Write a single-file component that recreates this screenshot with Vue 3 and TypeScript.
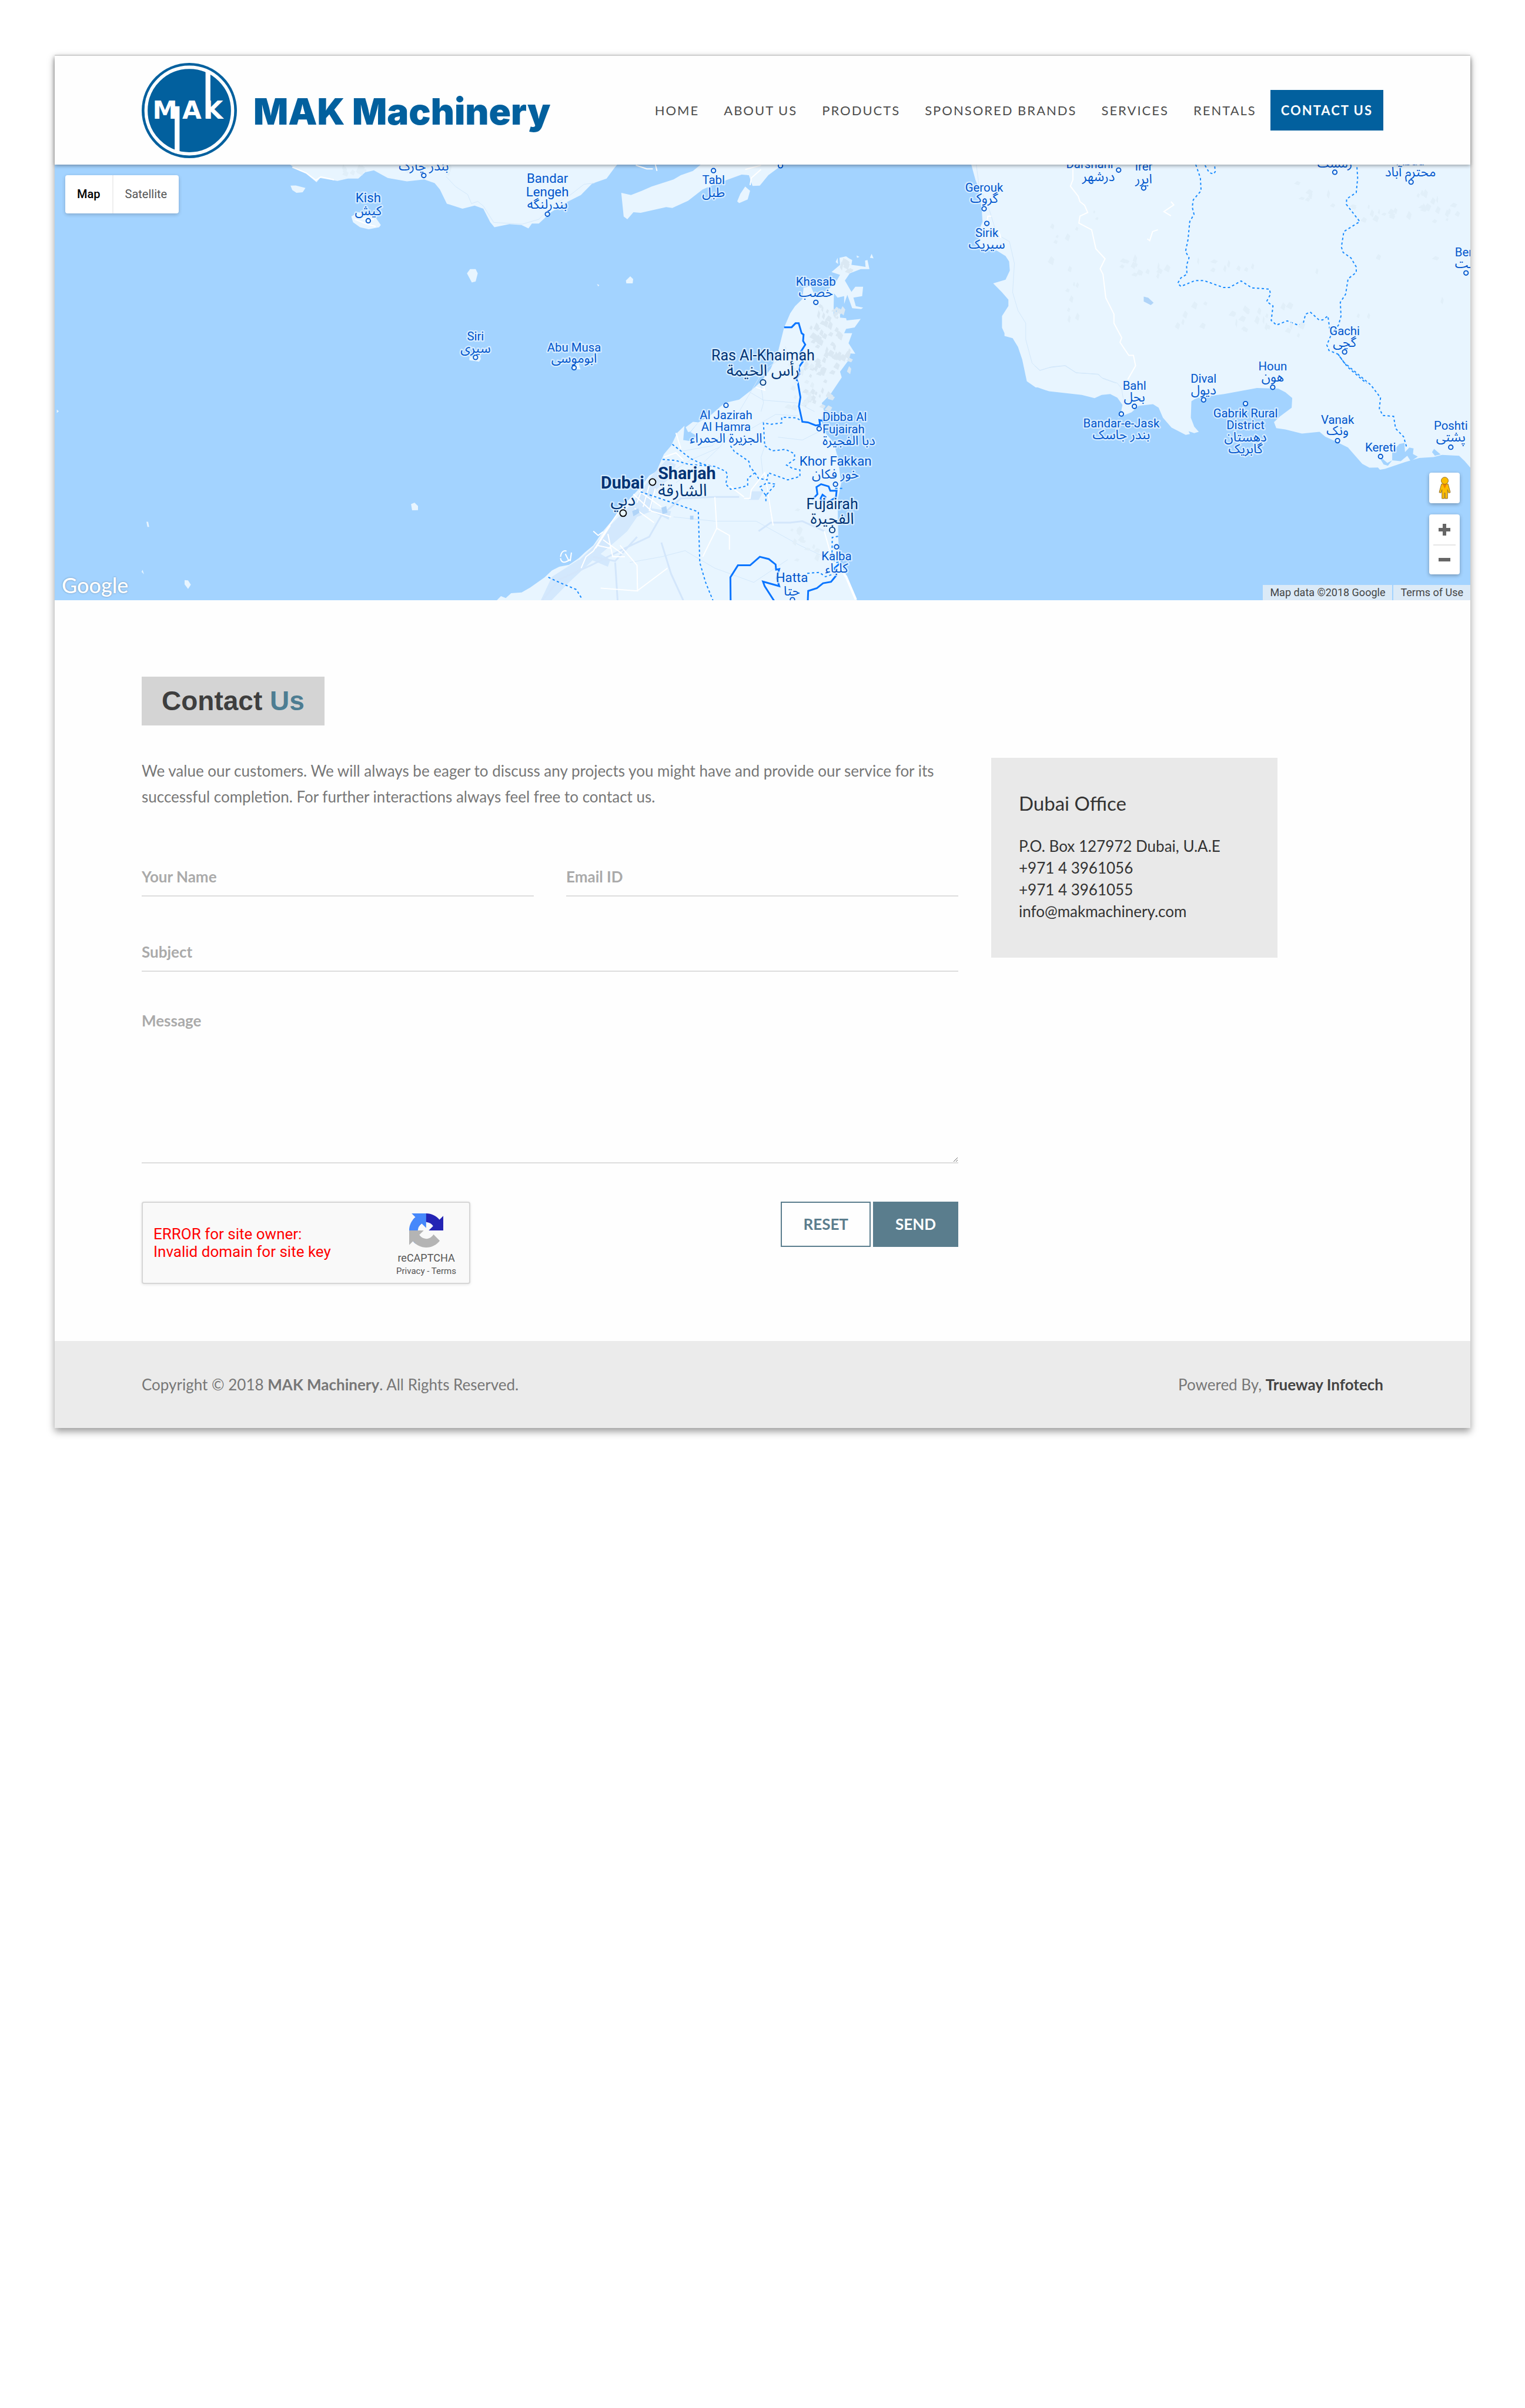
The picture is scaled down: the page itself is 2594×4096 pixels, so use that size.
<script setup lang="ts">
import { reactive } from 'vue'

type Anchor = 'start' | 'middle' | 'end'
interface Line { text: string; x: number; y: number; rtl?: boolean }
interface Place { kind: 'town' | 'town mid' | 'town major' | 'city'; anchor?: Anchor; lines: Line[]; dot?: [number, number] }

const nav = ['Home', 'About Us', 'Products', 'Sponsored Brands', 'Services', 'Rentals']

const form = reactive({ name: '', email: '', subject: '', message: '' })
function reset() {
  form.name = form.email = form.subject = form.message = ''
}

const t = (text: string, x: number, y: number): Line => ({ text, x, y })
const a = (text: string, x: number, y: number): Line => ({ text, x, y, rtl: true })

const places: Place[] = [
  { kind: 'town', lines: [a('بندر چارک', 678, 11)], dot: [678, 20] },
  { kind: 'town mid', lines: [t('Kish', 576, 69), a('کیش', 576, 93)], dot: [576, 103] },
  { kind: 'town mid', lines: [t('Bandar', 905, 34), t('Lengeh', 905, 58), a('بندرلنگه', 905, 81)], dot: [905, 91] },
  { kind: 'town', lines: [t('Siri', 773, 323), a('سیری', 773, 345)], dot: [773, 354] },
  { kind: 'town', lines: [t('Abu Musa', 954, 343), a('ابوموسی', 954, 364)], dot: [954, 373] },
  { kind: 'town', lines: [t('Tabl', 1210, 36), a('طبل', 1210, 59)], dot: [1210, 11] },
  { kind: 'town', lines: [], dot: [1333, 2] },
  { kind: 'town', lines: [t('Khasab', 1398, 222), a('خصب', 1398, 243)], dot: [1398, 253] },
  { kind: 'town major', lines: [t('Ras Al-Khaimah', 1301, 359), a('رأس الخيمة', 1301, 388)], dot: [1301, 400] },
  { kind: 'town', lines: [t('Al Jazirah', 1233, 467), t('Al Hamra', 1233, 489), a('الجزيرة الحمراء', 1233, 511)], dot: [1233, 442] },
  { kind: 'town', anchor: 'start', lines: [t('Dibba Al', 1410, 471), t('Fujairah', 1410, 493), a('دبا الفجيرة', 1410, 515)], dot: [1404, 485] },
  { kind: 'town mid', lines: [t('Khor Fakkan', 1434, 553), a('خور فكان', 1434, 576)], dot: [1434, 587] },
  { kind: 'town major', lines: [t('Fujairah', 1428, 633), a('الفجيرة', 1428, 660)], dot: [1428, 671] },
  { kind: 'town', lines: [t('Kalba', 1436, 727), a('كلباء', 1436, 749)], dot: [1436, 702] },
  { kind: 'town mid', lines: [t('Hatta', 1354, 767), a('حتا', 1354, 791)], dot: [1355, 799] },
  { kind: 'city', lines: [t('Dubai', 1043, 595), a('دبي', 1044, 626)], dot: [1044, 640] },
  { kind: 'city', anchor: 'start', lines: [t('Sharjah', 1108, 578), a('الشارقة', 1108, 609)], dot: [1098, 583] },
  { kind: 'town', lines: [t('Gerouk', 1707, 50), a('گروک', 1707, 70)], dot: [1707, 81] },
  { kind: 'town', lines: [t('Sirik', 1712, 133), a('سیریک', 1712, 154)], dot: [1712, 108] },
  { kind: 'town', lines: [t('Darshahr', 1902, 6), a('درشهر', 1917, 30)], dot: [1954, 10] },
  { kind: 'town', lines: [t('Irer', 2000, 11), a('ایرر', 2000, 35)], dot: [2000, 43] },
  { kind: 'town', lines: [a('رمشک', 2351, 5)], dot: [2351, 14] },
  { kind: 'town', lines: [t('Abad', 2490, 1), a('محترم آباد', 2490, 22)], dot: [2491, 32] },
  { kind: 'town', lines: [t('Bent', 2594, 168), a('بنت', 2592, 190)], dot: [2592, 199] },
  { kind: 'town', lines: [t('Gachi', 2369, 313), a('گچی', 2369, 335)], dot: [2369, 344] },
  { kind: 'town', lines: [t('Houn', 2237, 378), a('هون', 2237, 398)], dot: [2237, 409] },
  { kind: 'town', lines: [t('Dival', 2110, 401), a('دیول', 2110, 422)], dot: [2110, 432] },
  { kind: 'town', lines: [t('Bahl', 1983, 413), a('بحل', 1983, 435)], dot: [1983, 444] },
  { kind: 'town', lines: [t('Bandar-e-Jask', 1959, 483), a('بندر جاسک', 1959, 504)], dot: [1959, 458] },
  { kind: 'town', lines: [t('Gabrik Rural', 2187, 464), t('District', 2187, 486), a('دهستان', 2187, 508), a('گابریک', 2187, 530)], dot: [2187, 439] },
  { kind: 'town', lines: [t('Vanak', 2356, 476), a('ونک', 2356, 497)], dot: [2356, 507] },
  { kind: 'town', lines: [t('Kereti', 2435, 527)], dot: [2435, 536] },
  { kind: 'town', lines: [t('Poshti', 2564, 487), a('پشتی', 2564, 509)], dot: [2564, 519] },
]

/* Hill shading: small facets scattered round a centre, always the same for a given seed. */
function hills(cx: number, cy: number, w: number, h: number, count: number, seed: number): string {
  let s = seed * 7919
  const rnd = () => {
    s = (s * 16807) % 2147483647
    return s / 2147483647
  }
  let d = ''
  for (let i = 0; i < count; i++) {
    const x = Math.round(cx + (rnd() - 0.5) * w)
    const y = Math.round(cy + (rnd() - 0.5) * h)
    const l = Math.round(4 + rnd() * 7)
    const k = Math.round(2 + rnd() * 5)
    d += `M${x} ${y}l${k} -${l}l${k} ${Math.round(l / 2)}l-${Math.round(k / 2)} ${l}z`
  }
  return d
}
const darkHills = [
  hills(1415, 295, 60, 70, 30, 11),
  hills(1425, 350, 70, 70, 26, 27),
  hills(1395, 410, 50, 80, 26, 5),
  hills(1445, 190, 20, 30, 8, 93),
]
const paleHills = [
  hills(1365, 400, 50, 120, 22, 19),
  hills(1370, 680, 50, 130, 14, 41),
  hills(2000, 190, 90, 40, 14, 61),
  hills(2190, 285, 80, 40, 16, 71),
  hills(2160, 180, 130, 30, 8, 81),
  hills(2480, 90, 210, 30, 20, 101),
  hills(2520, 70, 40, 40, 8, 111),
  hills(1870, 235, 30, 110, 8, 121),
  hills(2080, 280, 60, 50, 6, 131),
  hills(1880, 120, 130, 120, 8, 141),
  hills(550, 12, 60, 12, 10, 151),
  hills(680, 12, 90, 16, 8, 161),
  hills(2330, 60, 120, 60, 8, 171),
  hills(2400, 250, 300, 200, 12, 181),
]
</script>

<template>
  <div class="page">
    <header class="header">
      <a class="brand" href="#">
        <svg class="emblem" viewBox="0 0 176 176" aria-hidden="true">
          <circle cx="88" cy="88" r="88" fill="#02609e" />
          <circle cx="88" cy="88" r="80" fill="none" stroke="#fff" stroke-width="6" />
          <path d="M61 80h9v87h-9zM118 15l9 6v82h-9z" fill="#fff" />
          <text class="emblem-text" x="20" y="103">M</text>
          <text class="emblem-text" x="75" y="103">A</text>
          <text class="emblem-text" x="115" y="103">K</text>
        </svg>
        <span class="brand-name">MAK Machinery</span>
      </a>
      <nav class="nav">
        <a v-for="item in nav" :key="item" href="#">{{ item }}</a>
        <a href="#" class="active">Contact Us</a>
      </nav>
    </header>

    <section class="map">
      <svg class="map-canvas" viewBox="0 0 2600 800" preserveAspectRatio="xMidYMid slice">
        <rect width="2600" height="800" fill="#a3d3ff" />

        <g transform="matrix(.6378 0 0 .523 -10 -12)">
          <path class="land" d="M685 15L710 38 740 55 770 85 780 70 830 80 860 72 890 72 910 50 935 43 975 70 1030 82 1080 75 1110 88 1125 110 1145 160 1190 178 1225 167 1250 178 1270 225 1282 243 1325 232 1360 235 1380 247 1390 230 1410 230 1445 190 1490 155 1531 130 1563 90 1605 72 1629 32 1645 10z" />
          <path class="land" d="M695 97L710 96 738 105 730 120 712 122 700 112zM870 205L890 190 935 200 955 235 950 243 920 250 895 243 875 225zM1212 390L1228 390 1234 405 1228 433 1217 437 1203 405zM1210 700L1240 690 1243 705 1238 715 1210 710zM1505 735L1525 722 1530 742 1508 742zM1042 1215L1052 1210 1062 1222 1062 1236 1045 1237zM280 1277L285 1277 288 1295 283 1295zM266 1453L269 1446 273 1461zM390 1482L400 1483 408 1498 400 1513 390 1497zM22 883L28 889 22 895z" />
          <path class="road" d="M700 32L740 52 768 78 782 66 820 76M880 215L915 232 940 240M895 212L935 216" />
          <path class="path" d="M1143 65L1170 100 1205 128 1216 160 1234 152 1250 168 1280 226 1362 232 1410 215 1450 165 1500 130 1540 92 1570 88" />
        </g>

        <g transform="matrix(.4464 0 0 .523 900 -12)">
          <path class="land" d="M315 122L325 205 340 215 365 190 395 192 500 172 525 175 590 150 650 110 700 92 810 58 840 60 855 98 885 97 920 60 960 35 990 10 660 10 610 45 560 60 530 75 440 100 400 115 355 130zM825 100L845 115 835 145 800 158 792 152 805 125zM334 430L352 415 364 425 362 440 336 440zM215 442L225 446 220 451z" />
          <path class="road" d="M825 40L890 25M845 95L850 70 890 40M375 25L420 38 445 38M455 22L462 45" />
          <path class="land" d="M-205 1560L-180 1538 -160 1545 -138 1528 -95 1525 -60 1508 0 1472 30 1448 60 1435 100 1428 140 1405 165 1385 200 1360 240 1310 290 1260 340 1205 390 1160 430 1115 460 1100 490 1040 520 1010 545 965 575 940 570 990 610 995 625 975 600 962 632 928 680 905 740 860 800 848 850 815 890 785 930 740 960 680 985 595 1010 545 1030 520 1060 495 1065 455 1095 450 1110 480 1160 465 1195 440 1215 410 1180 400 1215 375 1213 350 1240 345 1252 352 1265 358 1262 375 1290 378 1320 382 1318 360 1328 358 1336 390 1300 390 1255 405 1235 430 1262 470 1278 452 1310 452 1306 485 1270 490 1280 520 1310 525 1302 530 1265 527 1245 480 1232 512 1232 485 1205 490 1190 475 1188 550 1215 538 1215 560 1240 562 1242 570 1300 565 1275 595 1240 600 1232 615 1265 615 1250 650 1278 687 1240 685 1250 710 1215 750 1222 770 1175 830 1140 860 1150 890 1138 920 1150 960 1190 1000 1205 1050 1220 1140 1205 1200 1208 1340 1215 1420 1240 1470 1292 1565z" />
          <path class="land" d="M580 945L610 926 632 928 600 960 590 962zM1197 365L1205 350 1207 372zM1283 342L1295 347 1285 350zM1338 350L1345 336 1353 352z" />
          <path class="urban" d="M440 1115L500 1060 540 1075 520 1120 450 1170 440 1230 520 1240 510 1270 440 1240 380 1260 340 1310 300 1340 230 1390 270 1410 260 1435 190 1410 120 1430 200 1365 270 1290 350 1220 400 1165zM30 1470L140 1410 200 1410 100 1490 20 1560 -20 1560zM840 1200L850 1170 900 1170 880 1200z" />
          <path class="highway" d="M-10 1553L60 1480 190 1430 330 1370 430 1330 480 1255 560 1195 700 1190 800 1190M200 1400L290 1415 380 1330M290 1420L300 1553M880 1310L930 1280 1010 1280 1060 1275 1150 1310M480 1350L520 1460 570 1553" />
          <path class="path" d="M470 1130L600 1060 720 1015 780 950M560 1030L690 1010 800 890 900 745 980 700M890 800L900 860 890 890M840 820L900 850 1040 860 1110 890M720 1015L640 1080 540 1140M905 1120L920 1200 940 1290M960 980L1060 990 1130 960M530 1260L700 1275 870 1275 1050 1360 1150 1400M350 1420L480 1400 580 1378M580 1380L700 1440 860 1490 1000 1410M900 1130L890 1050 910 1000M850 950L950 900 1040 905" />
          <path class="road" d="M330 1210L250 1310 200 1380 170 1400 150 1440M365 1180L440 1240 520 1260M390 1170L480 1225M370 1230L450 1280M410 1140L380 1210M430 1150L405 1225M455 1160L430 1240M270 1290L210 1370M240 1340L320 1390M260 1320L280 1400 330 1400M215 1360L270 1370M65 1400Q70 1375 90 1380M65 1405Q70 1430 105 1410M85 1390L100 1415M110 1385L105 1415M200 1310L220 1325 240 1312M700 1190L708 1300 650 1400M708 1300L760 1325 760 1375M310 1360L380 1430 382 1520 230 1510M505 1440L380 1520M820 1195L845 1195 850 1165 905 1105 930 1240 940 1290M820 1190L760 1150M870 805L905 815 900 795M490 1050L540 1035 570 1060M540 965L560 1020M1150 1310L1180 1400" />
          <path class="road wide" d="M1215 1440L1240 1470 1280 1550" />
          <path class="lake" d="M598 1256h14v13h-14zM360 1240L385 1230 390 1245 365 1258zM480 1228L500 1222 505 1245 485 1250z" />
          <path class="dash" d="M525 1005L600 1055 650 1075 700 1083 745 1100 752 1112 745 1145 765 1163 800 1158 835 1150 835 1125 865 1105 845 1085 840 1065 780 1030 760 1005M485 1058L540 1062 590 1075 700 1083M865 1105L880 1125 915 1130 920 1105 1000 1130 1050 1118 1050 1095 1020 1090 995 1078 1028 1058 1028 1038 990 1023 935 1028 905 1010 900 930 930 935 975 930 975 910 1035 912 1060 925M885 1155L915 1140 950 1145 910 1185 885 1155M910 1180L910 1210M395 1172L440 1185 632 1242 638 1420 662 1490 692 1553M15 1472L60 1490 130 1515 155 1550M1195 1160L1225 1160M1207 1328L1183 1332 1182 1400 1195 1420 1225 1418M1080 1458L1130 1455 1155 1470 1190 1460" />
          <path class="border" d="M985 594L1016 594 1032 580 1045 580 1057 615 1065 620 1063 642 1072 655 1050 685 1062 715 1045 735 1050 755 1035 775 1042 790 1052 840 1046 872 1060 926 1083 928 1115 939 1133 937 1130 920 1145 923" />
          <path class="border" d="M1100 1200L1122 1180 1118 1155 1137 1145 1168 1153 1175 1168 1201 1168 1198 1192 1160 1210M1135 1195L1143 1182 1155 1190 1150 1203 1138 1205zM765 1563L764 1472 795 1430 845 1430 885 1400 922 1408 950 1427 952 1445 965 1443 955 1475 965 1503 898 1487 905 1503 950 1563M1082 1563L1084 1520 1120 1510 1145 1493 1178 1488 1200 1465 1192 1440 1212 1425" />
        </g>

        <g transform="matrix(.6505 0 0 .3333 1600 -12)">
          <path class="land" d="M126 20L140 120 150 170 158 290 160 350 150 400 150 500 200 510 225 540 235 570 237 620 225 670 190 690 215 740 233 780 233 815 215 870 215 935 222 965 222 980 245 992 260 1040 272 1110 285 1230 310 1264 1545 1264 1545 20z" />
          <path class="path" d="M142 30L150 150 180 290 200 420 236 460 250 580 245 740 260 840 282 910 282 1000 300 1130 322 1170 355 1150 394 1143 425 1183 485 1190 500 1215 550 1250" />
          <path class="road" d="M415 36L415 120 408 155 430 210 435 240 448 260 457 300 435 320 432 358 468 395 480 500 506 555 492 610 500 640 508 770 531 860 531 910 553 990 548 1015 573 1087 586 1087 592 1145 570 1220M692 240L700 258 672 295 692 318M655 395L640 405 632 455 625 445M172 370L175 320 185 320M205 400L212 440" />
          <path class="lake" d="M615 763L628 770 643 797 635 810 615 790z" />
          <path class="dash" d="M762 36L775 110 777 180 755 230 752 270 757 310 745 350 740 450 733 515 743 550 736 590 737 640 720 660 711 690 720 707 760 675 785 675 840 713 857 713 890 677 920 715 970 722 973 750 962 790 980 815 975 895 990 920 1020 897 1050 920 1065 913 1072 860 1085 848 1110 892 1120 892 1135 870 1140 940M788 40L800 80 812 88 817 75 815 36M1217 50L1219 110 1215 190 1188 225 1187 255 1225 350 1180 405 1173 490 1178 520 1200 550 1215 600 1215 630 1192 665 1185 750 1170 795 1172 870 1165 920 1145 970 1132 1030 1138 1060 1163 1080 1190 1150 1255 1260" />
        </g>

        <g transform="matrix(.523 0 0 .3333 1800 348)">
          <path class="land" d="M0 160L0 178 50 205 165 225 210 243 235 225 265 220 290 240 308 280 300 340 290 352 340 320 365 285 415 276 435 295 450 350 480 405 530 445 545 440 540 425 560 435 576 428 560 400 548 350 550 260 570 240 665 220 780 187 855 190 880 210 904 242 902 295 860 345 840 375 848 408 880 415 938 438 1000 428 1020 455 1055 480 1100 515 1150 605 1175 626 1205 625 1212 637 1230 632 1300 595 1350 572 1400 567 1430 555 1490 560 1510 590 1530 627 1545 640 1545 160z" />
          <path class="sea" d="M1212 575L1218 572 1238 600 1255 585 1255 540 1280 495 1298 490 1300 540 1315 515 1330 520 1328 550 1345 565 1320 590 1308 560 1285 590 1255 585 1240 615 1225 608zM1395 540L1402 522 1425 553 1405 560z" />
          <path class="path" d="M0 65L18 90 50 75 106 64 145 103 225 112 235 130 290 160 305 190 310 240 330 290" />
          <path class="dash" d="M1065 0L1085 45 1180 170 1214 240 1210 300 1222 338 1260 343 1267 410 1295 455 1307 520" />
        </g>

        <path v-for="(d, i) in darkHills" :key="'d' + i" :d="d" class="hill dark" />
        <path v-for="(d, i) in paleHills" :key="'p' + i" :d="d" class="hill" />

        <g v-for="(p, i) in places" :key="i" :class="p.kind">
          <text
            v-for="l in p.lines"
            :key="l.text"
            :class="{ arabic: l.rtl }"
            :x="l.x"
            :y="l.y"
            :text-anchor="p.anchor ?? 'middle'"
          >{{ l.text }}</text>
          <circle v-if="p.dot" :cx="p.dot[0]" :cy="p.dot[1]" r="4" />
        </g>
      </svg>

      <div class="map-type">
        <button type="button" class="on">Map</button>
        <button type="button">Satellite</button>
      </div>

      <a class="google" href="#">Google</a>

      <div class="map-tools">
        <button type="button" class="tool" aria-label="Street View">
          <svg class="pegman" viewBox="0 0 22 40" aria-hidden="true">
            <path d="M5 13Q11 11 17 13L21 28 18 29 16 23V39H11.5V29h-1V39H6V23L4 29 1 28z" fill="#fdbd00" stroke="#8a6a2a" stroke-width="1" />
            <path d="M7 13h8l-4 8z" fill="#ef8200" />
            <circle cx="11" cy="7" r="6.3" fill="#fdbd00" stroke="#8a6a2a" stroke-width="1" />
          </svg>
        </button>
        <div class="zoom">
          <button type="button" aria-label="Zoom in">
            <svg viewBox="0 0 20 20" aria-hidden="true"><path d="M7 0h6v7h7v6h-7v7H7v-7H0V7h7z" fill="#666" /></svg>
          </button>
          <button type="button" aria-label="Zoom out">
            <svg viewBox="0 0 20 20" aria-hidden="true"><path d="M0 7h20v6H0z" fill="#666" /></svg>
          </button>
        </div>
      </div>

      <div class="credits">
        <span>Map data ©2018 Google</span>
        <a href="#">Terms of Use</a>
      </div>
    </section>

    <main class="contact">
      <h1>Contact <span>Us</span></h1>
      <div class="columns">
        <form @submit.prevent>
          <p class="intro">
            We value our customers. We will always be eager to discuss any projects you might have and provide our service for its successful completion. For further interactions always feel free to contact us.
          </p>
          <div class="fields">
            <input v-model="form.name" type="text" placeholder="Your Name" aria-label="Your Name" />
            <input v-model="form.email" type="email" placeholder="Email ID" aria-label="Email ID" />
            <input v-model="form.subject" class="full" type="text" placeholder="Subject" aria-label="Subject" />
            <textarea v-model="form.message" class="full" placeholder="Message" aria-label="Message"></textarea>
          </div>
          <div class="actions">
            <div class="captcha">
              <p>ERROR for site owner:<br />Invalid domain for site key</p>
              <div class="captcha-brand">
                <svg viewBox="0 0 64 64" aria-hidden="true">
                  <path fill="#2424b4" d="M64 31.955l-.033-1.37V4.687l-7.16 7.16C50.948 4.674 42.033.093 32.05.093c-10.4 0-19.622 4.96-25.458 12.64l11.736 11.86a15.55 15.55 0 0 1 4.754-5.334c2.05-1.6 4.952-2.906 8.968-2.906.485 0 .86.057 1.135.163 4.976.393 9.288 3.14 11.828 7.124l-8.307 8.307L64 31.953" />
                  <path fill="#4688fb" d="M31.862.094l-1.37.033H4.594l7.16 7.16C4.58 13.147 0 22.06 0 32.046c0 10.4 4.96 19.622 12.64 25.458L24.5 45.768a15.55 15.55 0 0 1-5.334-4.754c-1.6-2.05-2.906-4.952-2.906-8.968 0-.485.057-.86.163-1.135.393-4.976 3.14-9.288 7.124-11.828l8.307 8.307L31.86.095" />
                  <path fill="#b4b4b4" d="M.001 32.045l.033 1.37v25.898l7.16-7.16c5.86 7.173 14.774 11.754 24.76 11.754 10.4 0 19.622-4.96 25.458-12.64l-11.736-11.86a15.55 15.55 0 0 1-4.754 5.334c-2.05 1.6-4.952 2.906-8.968 2.906-.485 0-.86-.057-1.135-.163-4.976-.393-9.288-3.14-11.828-7.124l8.307-8.307c-10.522.04-22.4.066-27.295-.005" />
                </svg>
                <strong>reCAPTCHA</strong>
                <small><a href="#">Privacy</a> - <a href="#">Terms</a></small>
              </div>
            </div>
            <div class="buttons">
              <button type="button" @click="reset">RESET</button>
              <button type="submit" class="send">SEND</button>
            </div>
          </div>
        </form>
        <aside>
          <address class="office">
            <h2>Dubai Office</h2>
            P.O. Box 127972 Dubai, U.A.E<br />
            +971 4 3961056<br />
            +971 4 3961055<br />
            info@makmachinery.com
          </address>
        </aside>
      </div>
    </main>

    <footer class="footer">
      <span>Copyright © 2018 <b>MAK Machinery</b>. All Rights Reserved.</span>
      <span>Powered By, <a href="#">Trueway Infotech</a></span>
    </footer>
  </div>
</template>

<style>
body {
  margin: 0;
  background: #fff;
}
</style>

<style scoped>
* {
  box-sizing: border-box;
}
a {
  color: inherit;
  text-decoration: none;
}
button {
  margin: 0;
  border: 0;
  background: none;
  cursor: pointer;
}
.page {
  margin: 93px;
  background: #fefefe;
  border-top: 2px solid #ddd;
  box-shadow: 0 6px 12px rgba(0, 0, 0, 0.4);
  font-family: Lato, "Liberation Sans", sans-serif;
  font-size: 26px;
  color: #777;
}

/* Header */
.header {
  position: relative;
  z-index: 1;
  display: flex;
  align-items: center;
  justify-content: space-between;
  height: 185px;
  padding: 0 148px;
  background: #fefefe;
  box-shadow: 0 2px 6px rgba(0, 0, 0, 0.35);
}
.brand {
  display: flex;
  align-items: center;
  gap: 28px;
}
.emblem {
  display: block;
  width: 162px;
  height: 162px;
}
.emblem-text {
  font: 700 46px "DejaVu Sans", sans-serif;
  fill: #fff;
}
.brand-name {
  padding-top: 4px;
  font: 900 62px/80px Inter, "Liberation Sans", sans-serif;
  white-space: nowrap;
  color: #02609e;
}
.nav {
  display: flex;
  gap: 6px;
}
.nav a {
  padding: 0 18px;
  font-size: 22px;
  line-height: 69px;
  letter-spacing: 2px;
  text-transform: uppercase;
  white-space: nowrap;
  color: #4d4d4d;
}
.nav .active {
  background: #02609e;
  color: #fff;
  font-weight: 700;
}

/* Map */
.map {
  position: relative;
  height: 741px;
  overflow: hidden;
  font-family: Roboto, "Liberation Sans", sans-serif;
}
.map-canvas {
  display: block;
  width: 100%;
  height: 100%;
}
.map-canvas path {
  vector-effect: non-scaling-stroke;
}
.land {
  fill: #e8f5ff;
}
.sea {
  fill: #a3d3ff;
}
.urban {
  fill: #d3e8fd;
}
.lake {
  fill: #b0d4f8;
}
.road,
.path,
.highway,
.dash,
.border {
  fill: none;
}
.road {
  stroke: #fff;
  stroke-width: 2px;
}
.road.wide {
  stroke-width: 4px;
}
.path {
  stroke: #d3e8fb;
  stroke-width: 1px;
}
.highway {
  stroke: #d3e6fb;
  stroke-width: 3px;
}
.dash {
  stroke: #1a8cff;
  stroke-width: 2px;
  stroke-dasharray: 4 4;
}
.border {
  stroke: #0a75ff;
  stroke-width: 3px;
}
.hill {
  fill: #e1eff9;
}
.hill.dark {
  fill: #dae8f3;
}
.map-canvas text {
  font-family: Roboto, "Noto Sans Arabic", "DejaVu Sans", sans-serif;
  font-size: 22px;
  fill: #0055cc;
  stroke: #e8f5ff;
  stroke-opacity: 0.7;
  stroke-width: 5px;
  stroke-linejoin: round;
  paint-order: stroke;
}
.map-canvas circle {
  fill: #e8f5ff;
  stroke: #0055cc;
  stroke-width: 2px;
}
.map-canvas .arabic,
.map-canvas .mid text {
  font-size: 24px;
}
.map-canvas .major text {
  font-size: 27px;
  fill: #003375;
}
.map-canvas .major .arabic {
  font-size: 29px;
}
.map-canvas .major circle {
  r: 5px;
  stroke: #003a80;
}
.map-canvas .city text {
  font-size: 31px;
  font-weight: 700;
  fill: #003375;
}
.map-canvas .city .arabic {
  font-size: 31px;
  font-weight: 400;
}
.map-canvas .city circle {
  r: 6px;
  stroke: #000;
}
.map-type {
  position: absolute;
  top: 18px;
  left: 18px;
  display: flex;
  border-radius: 4px;
  background: #fff;
  box-shadow: 0 2px 6px rgba(0, 0, 0, 0.2);
}
.map-type button {
  padding: 0 20px;
  font: 400 20px/65px Roboto, sans-serif;
  color: #565656;
}
.map-type .on {
  font-weight: 500;
  color: #000;
  border-right: 2px solid #eee;
}
.google {
  position: absolute;
  left: 12px;
  bottom: 4px;
  font: 500 36px/44px Lato, sans-serif;
  color: #fff;
  text-shadow: 0 0 3px rgba(0, 0, 0, 0.35);
}
.map-tools {
  position: absolute;
  right: 18px;
  bottom: 44px;
  display: flex;
  flex-direction: column;
  gap: 19px;
}
.map-tools button {
  display: flex;
  align-items: center;
  justify-content: center;
  padding: 0;
  width: 52px;
}
.tool,
.zoom {
  border-radius: 4px;
  background: #fff;
  box-shadow: 0 2px 6px rgba(0, 0, 0, 0.3);
}
.map-tools .tool {
  height: 52px;
  background: #fff;
}
.pegman {
  width: 21px;
  height: 38px;
}
.zoom button {
  height: 51px;
}
.zoom button + button {
  background: linear-gradient(#e6e6e6, #e6e6e6) center top / 38px 2px no-repeat;
}
.zoom svg {
  width: 20px;
  height: 20px;
}
.credits {
  position: absolute;
  right: 0;
  bottom: 0;
  display: flex;
  gap: 2px;
  font-size: 18px;
  line-height: 26px;
  color: #444;
}
.credits > * {
  padding: 0 12px;
  background: #dbeaf7;
}

/* Contact */
.contact {
  padding: 130px 148px 97px;
}
h1 {
  width: fit-content;
  margin: 0 0 55px;
  padding: 0 34px;
  background: #d4d4d4;
  font: 700 46px/83px "Liberation Sans", Arial, sans-serif;
  color: #3e3e3e;
}
h1 span {
  color: #4d7d92;
}
.columns {
  display: grid;
  grid-template-columns: minmax(0, 1389fr) minmax(0, 667fr);
  gap: 56px;
}
.intro {
  margin: 0 0 88px;
  line-height: 44px;
}
.fields {
  display: grid;
  grid-template-columns: 1fr 1fr;
  gap: 68px 55px;
}
.full {
  grid-column: 1 / -1;
}
input,
textarea {
  display: block;
  width: 100%;
  margin: 0;
  padding: 0 0 6px;
  height: 60px;
  border: 0;
  border-bottom: 2px solid #ddd;
  border-radius: 0;
  background: none;
  font: 700 26px/30px Lato, sans-serif;
  color: #555;
  outline: none;
}
textarea {
  height: 258px;
  padding: 0;
  resize: vertical;
}
::placeholder {
  color: #aaa;
  opacity: 1;
}
.actions {
  display: flex;
  align-items: flex-start;
  justify-content: space-between;
  margin-top: 65px;
}
.captcha {
  display: flex;
  align-items: center;
  justify-content: space-between;
  width: 559px;
  height: 140px;
  padding: 0 22px 0 18px;
  border: 2px solid #d6d6d6;
  border-radius: 4px;
  background: #f9f9f9;
  box-shadow: 0 1px 5px rgba(0, 0, 0, 0.1);
  font-family: Roboto, sans-serif;
  color: #555;
}
.captcha p {
  margin: 0;
  font-size: 26px;
  line-height: 30px;
  color: #f00;
}
.captcha-brand {
  display: flex;
  flex-direction: column;
  align-items: center;
  padding-top: 8px;
}
.captcha-brand svg {
  width: 60px;
  height: 58px;
  margin-bottom: 6px;
}
.captcha-brand strong {
  font-size: 18px;
  line-height: 24px;
  font-weight: 400;
}
.captcha-brand small {
  font-size: 15px;
  line-height: 20px;
}
.buttons {
  display: flex;
  gap: 4px;
}
.buttons button {
  padding: 0 36px;
  border: 2px solid #5a7d8d;
  font: 700 26px/73px Lato, sans-serif;
  color: #5a7d8d;
}
.buttons .send {
  background: #5a7d8d;
  color: #fff;
}
.office {
  width: 73%;
  padding: 52px 47px 60px;
  background: #e9e9e9;
  font-style: normal;
  line-height: 37px;
  color: #333;
}
.office h2 {
  margin: 0 0 30px;
  font-size: 33px;
  line-height: 50px;
  font-weight: 400;
}

/* Footer */
.footer {
  display: flex;
  align-items: center;
  justify-content: space-between;
  height: 148px;
  padding: 0 148px;
  background: #ebebeb;
}
.footer a {
  font-weight: 700;
  color: #444;
}
</style>
